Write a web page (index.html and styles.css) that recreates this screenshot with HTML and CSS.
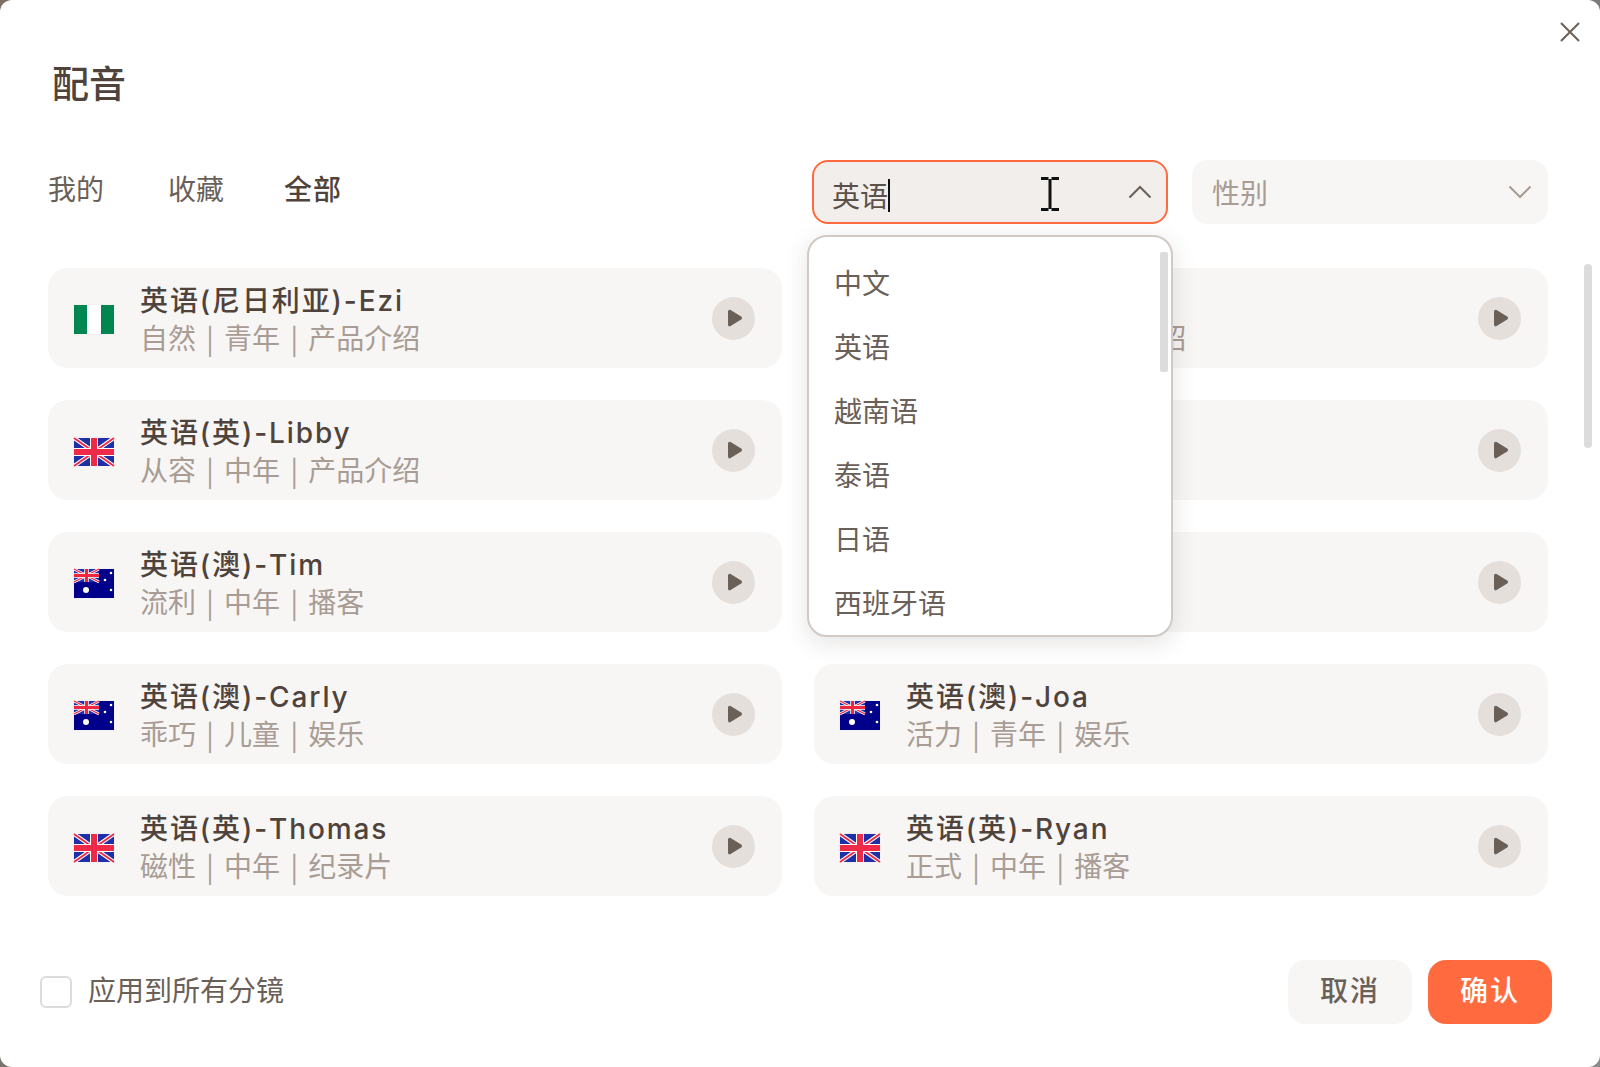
FILE: index.html
```html
<!DOCTYPE html>
<html lang="zh-CN">
<head>
<meta charset="utf-8">
<title>配音</title>
<link rel="stylesheet" href="styles.css">
</head>
<body>
<svg class="defs" width="0" height="0" aria-hidden="true">
  <defs>
    <symbol id="flag-ng" viewBox="0 0 42 31">
      <rect width="42" height="31" rx="2" fill="#f3f1f1"/>
      <rect x="1" y="1" width="13" height="29" fill="#008751"/>
      <rect x="14" y="1" width="14" height="29" fill="#fff"/>
      <rect x="28" y="1" width="13" height="29" fill="#008751"/>
    </symbol>
    <symbol id="flag-gb" viewBox="0 0 42 31">
      <rect width="42" height="31" rx="2" fill="#f3f1f1"/>
      <rect x="1" y="2" width="40" height="28" fill="#1f2fa8"/>
      <path d="M1 2L41 30M41 2L1 30" stroke="#fff" stroke-width="4"/>
      <path d="M1 2L41 30M41 2L1 30" stroke="#ee2a48" stroke-width="2"/>
      <path d="M21 2V30M1 16H41" stroke="#fff" stroke-width="8"/>
      <path d="M21 2V30M1 16H41" stroke="#ee2a48" stroke-width="6"/>
    </symbol>
    <symbol id="flag-au" viewBox="0 0 42 31">
      <rect width="42" height="31" rx="2" fill="#f3f1f1"/>
      <rect x="1" y="1" width="40" height="29" fill="#00008b"/>
      <rect x="1" y="1" width="25" height="13" fill="#1f2fa8"/>
      <path d="M1 1L26 14M26 1L1 14" stroke="#fff" stroke-width="2.6"/>
      <path d="M1 1L26 14M26 1L1 14" stroke="#f0263f" stroke-width="1.4"/>
      <path d="M13.5 1V14M1 7.5H26" stroke="#fff" stroke-width="4.5"/>
      <path d="M13.5 1V14M1 7.5H26" stroke="#f0263f" stroke-width="3"/>
      <circle cx="13" cy="22" r="3" fill="#fff"/>
      <circle cx="32" cy="12" r="1.3" fill="#fff"/>
      <circle cx="38" cy="5" r="1.3" fill="#fff"/>
      <circle cx="38" cy="22" r="1.3" fill="#fff"/>
    </symbol>
    <symbol id="play" viewBox="0 0 18 20">
      <path d="M3.7 3.4L14.3 10L3.7 16.6Z" fill="#6b6058" stroke="#6b6058" stroke-width="3.4" stroke-linejoin="round"/>
    </symbol>
  </defs>
</svg>

<main class="dialog">
  <svg class="close" viewBox="0 0 20 20" width="20" height="20" aria-label="关闭"><path d="M1 1L19 19M19 1L1 19" fill="none" stroke="#6b6058" stroke-width="2"/></svg>
  <h1 class="title">配音</h1>

  <div class="toolbar">
    <nav class="tabs">
      <span class="tab">我的</span>
      <span class="tab">收藏</span>
      <span class="tab tab-active">全部</span>
    </nav>
    <div class="filters">
      <div class="select select-open">
        <span class="select-value">英语</span><span class="caret"></span>
        <svg class="chevron" viewBox="0 0 24 14" width="24" height="14"><path d="M1.5 12.5L12 2L22.5 12.5" fill="none" stroke="#6b6058" stroke-width="2"/></svg>
      </div>
      <div class="select">
        <span class="select-placeholder">性别</span>
        <svg class="chevron" viewBox="0 0 24 14" width="24" height="14"><path d="M1.5 1.5L12 12L22.5 1.5" fill="none" stroke="#a89c94" stroke-width="2"/></svg>
      </div>
    </div>
  </div>

  <section class="voices">
    <article class="voice"><svg class="flag"><use href="#flag-ng"/></svg><div class="voice-text"><div class="voice-name">英语(尼日利亚)-Ezi</div><div class="voice-tags">自然 | 青年 | 产品介绍</div></div><div class="play"><svg class="play-icon" width="18" height="20"><use href="#play"/></svg></div></article>
    <article class="voice"><svg class="flag"><use href="#flag-ng"/></svg><div class="voice-text"><div class="voice-name">英语(尼日利亚)-Abi</div><div class="voice-tags">自然 | 青年 | 产品介绍</div></div><div class="play"><svg class="play-icon" width="18" height="20"><use href="#play"/></svg></div></article>
    <article class="voice"><svg class="flag"><use href="#flag-gb"/></svg><div class="voice-text"><div class="voice-name">英语(英)-Libby</div><div class="voice-tags">从容 | 中年 | 产品介绍</div></div><div class="play"><svg class="play-icon" width="18" height="20"><use href="#play"/></svg></div></article>
    <article class="voice"><svg class="flag"><use href="#flag-gb"/></svg><div class="voice-text"><div class="voice-name">英语(英)-Noah</div><div class="voice-tags">沉稳 | 中年 | 播客</div></div><div class="play"><svg class="play-icon" width="18" height="20"><use href="#play"/></svg></div></article>
    <article class="voice"><svg class="flag"><use href="#flag-au"/></svg><div class="voice-text"><div class="voice-name">英语(澳)-Tim</div><div class="voice-tags">流利 | 中年 | 播客</div></div><div class="play"><svg class="play-icon" width="18" height="20"><use href="#play"/></svg></div></article>
    <article class="voice"><svg class="flag"><use href="#flag-au"/></svg><div class="voice-text"><div class="voice-name">英语(澳)-Ella</div><div class="voice-tags">活力 | 青年 | 播客</div></div><div class="play"><svg class="play-icon" width="18" height="20"><use href="#play"/></svg></div></article>
    <article class="voice"><svg class="flag"><use href="#flag-au"/></svg><div class="voice-text"><div class="voice-name">英语(澳)-Carly</div><div class="voice-tags">乖巧 | 儿童 | 娱乐</div></div><div class="play"><svg class="play-icon" width="18" height="20"><use href="#play"/></svg></div></article>
    <article class="voice"><svg class="flag"><use href="#flag-au"/></svg><div class="voice-text"><div class="voice-name">英语(澳)-Joa</div><div class="voice-tags">活力 | 青年 | 娱乐</div></div><div class="play"><svg class="play-icon" width="18" height="20"><use href="#play"/></svg></div></article>
    <article class="voice"><svg class="flag"><use href="#flag-gb"/></svg><div class="voice-text"><div class="voice-name">英语(英)-Thomas</div><div class="voice-tags">磁性 | 中年 | 纪录片</div></div><div class="play"><svg class="play-icon" width="18" height="20"><use href="#play"/></svg></div></article>
    <article class="voice"><svg class="flag"><use href="#flag-gb"/></svg><div class="voice-text"><div class="voice-name">英语(英)-Ryan</div><div class="voice-tags">正式 | 中年 | 播客</div></div><div class="play"><svg class="play-icon" width="18" height="20"><use href="#play"/></svg></div></article>
  </section>

  <footer class="footer">
    <label class="apply"><span class="checkbox"></span><span class="apply-text">应用到所有分镜</span></label>
    <div class="actions">
      <button class="btn btn-cancel">取消</button>
      <button class="btn btn-confirm">确认</button>
    </div>
  </footer>

  <div class="scrollbar"></div>

  <div class="dropdown">
    <ul class="options">
      <li>中文</li>
      <li>英语</li>
      <li>越南语</li>
      <li>泰语</li>
      <li>日语</li>
      <li>西班牙语</li>
    </ul>
    <div class="dropdown-thumb"></div>
  </div>

  <svg class="ibeam" viewBox="0 0 20 34" width="20" height="34" aria-hidden="true"><path d="M1 1.5H8.5M11.5 1.5H19M1 32.5H8.5M11.5 32.5H19" stroke="#111" stroke-width="3" fill="none"/><path d="M10 2V32" stroke="#111" stroke-width="3" fill="none"/></svg>
</main>
</body>
</html>
```
FILE: styles.css
```css
* { box-sizing: border-box; }
html, body { margin: 0; padding: 0; }
body {
  width: 1600px;
  height: 1067px;
  overflow: hidden;
  background: linear-gradient(135deg, #7e6e64, #77736f 50%, #8a8a8a);
  font-family: "Noto Sans CJK SC", "Noto Sans", sans-serif;
  color: #6b6058;
}
.defs { position: absolute; }
.dialog {
  position: relative;
  width: 1600px;
  height: 1067px;
  background: #fff;
  border-radius: 12px;
  padding: 0 52px 0 48px;
  overflow: hidden;
}
.close { position: absolute; left: 1560px; top: 22px; }
.title {
  margin: 0;
  padding: 58px 0 0 4px;
  height: 110px;
  font-size: 37px;
  line-height: 48px;
  font-weight: 500;
  color: #4f433b;
}
.toolbar {
  display: flex;
  justify-content: space-between;
  align-items: flex-start;
  margin-top: 50px;
  height: 108px;
}
.tabs { display: flex; gap: 64px; padding-top: 8px; }
.tab { font-size: 28px; line-height: 40px; color: #6b6058; }
.tab-active { font-weight: 500; color: #4f433b; margin-left: -4px; letter-spacing: 1px; }
.filters { display: flex; gap: 24px; }
.select {
  display: flex;
  align-items: center;
  width: 356px;
  height: 64px;
  padding: 0 16px 0 20px;
  border-radius: 16px;
  background: #f7f6f5;
  font-size: 28px;
}
.select-open {
  background: #f1eeeb;
  border: 2px solid #ff6b3f;
  padding-left: 18px;
  padding-right: 14px;
}
.select-value { color: #5c5048; line-height: 40px; position: relative; top: 3px; }
.caret { width: 2px; height: 33px; background: #111; position: relative; top: 3px; }
.select-placeholder { color: #a89c94; line-height: 40px; }
.chevron { margin-left: auto; }
.voices {
  display: grid;
  grid-template-columns: 734px 734px;
  grid-auto-rows: 100px;
  gap: 32px;
}
.voice {
  display: flex;
  align-items: center;
  padding: 0 27px 0 25px;
  border-radius: 20px;
  background: #f7f6f5;
}
.flag { width: 42px; height: 31px; flex: none; margin-top: 3px; }
.voice-text { margin-left: 25px; flex: 1; min-width: 0; }
.voice-name {
  font-family: "Inter", "Noto Sans CJK SC", sans-serif;
  font-size: 28px;
  line-height: 38px;
  font-weight: 500;
  letter-spacing: 1.9px;
  color: #4f433b;
  white-space: nowrap;
  position: relative;
  top: 2px;
}
.voice-tags {
  font-size: 28px;
  line-height: 38px;
  word-spacing: 4px;
  color: #a89c94;
  white-space: nowrap;
}
.play {
  display: flex;
  align-items: center;
  justify-content: center;
  width: 43px;
  height: 43px;
  border-radius: 50%;
  background: #e5dfdc;
  flex: none;
}
.play-icon { margin-left: 3px; }
.footer {
  display: flex;
  justify-content: space-between;
  align-items: center;
  margin: 64px -4px 0 -8px;
}
.apply { display: flex; align-items: center; gap: 16px; font-size: 28px; line-height: 40px; color: #6b6058; }
.apply-text { margin-top: -6px; }
.checkbox { width: 32px; height: 32px; border: 2px solid #dcdcdc; border-radius: 6px; background: #fff; }
.actions { display: flex; gap: 16px; }
.btn {
  width: 124px;
  height: 64px;
  padding: 0 0 6px;
  border: 0;
  border-radius: 18px;
  font-family: inherit;
  font-size: 28px;
  font-weight: 500;
  letter-spacing: 2px;
}
.btn-cancel { background: #f7f6f5; color: #6b6058; }
.btn-confirm { background: #ff6b3f; color: #fff; }
.scrollbar {
  position: absolute;
  left: 1584px;
  top: 264px;
  width: 8px;
  height: 184px;
  border-radius: 4px;
  background: #dcdcdc;
}
.dropdown {
  position: absolute;
  left: 807px;
  top: 235px;
  width: 366px;
  height: 402px;
  border: 2px solid #d0c9c4;
  border-radius: 20px;
  background: #fff;
  box-shadow: 0 6px 24px rgba(80, 60, 50, 0.14);
  overflow: hidden;
}
.options { list-style: none; margin: 0; padding: 13px 0 0 25px; }
.options li { height: 64px; font-size: 28px; line-height: 64px; color: #6b6058; }
.dropdown-thumb {
  position: absolute;
  right: 3px;
  top: 15px;
  width: 8px;
  height: 120px;
  border-radius: 2px;
  background: #dcdcdc;
}
.ibeam { position: absolute; left: 1040px; top: 177px; }
```
